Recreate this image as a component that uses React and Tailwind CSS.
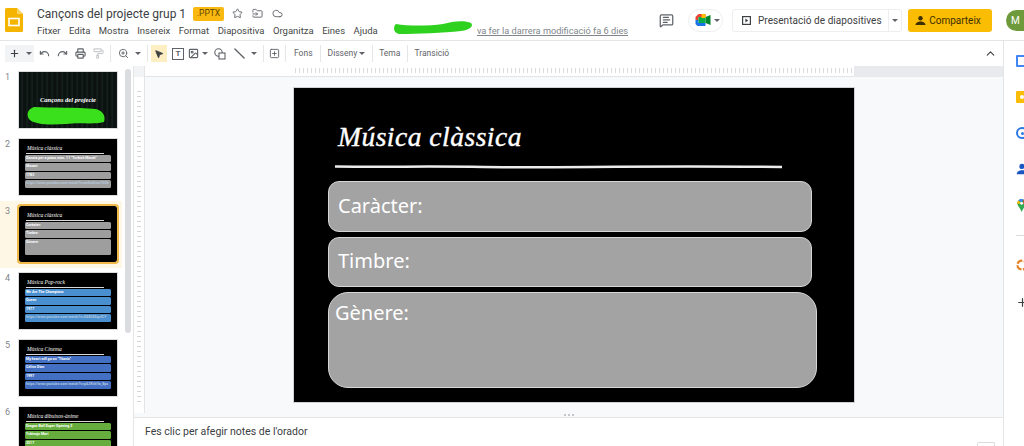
import React from 'react';
import {
  Plus, Undo, Redo, Printer, PaintRoller, ZoomIn, MousePointer2, Image, Slash,
  SquarePlus, Star, FolderInput, Cloud, MessageSquareText, ChevronUp,
} from 'lucide-react';

const menus = ['Fitxer', 'Edita', 'Mostra', 'Insereix', 'Format', 'Diapositiva', 'Organitza', 'Eines', 'Ajuda'];

const Caret = ({ className = '' }) => (
  <span className={`inline-block w-0 h-0 border-x-[3px] border-x-transparent border-t-[3px] border-t-[#5f6368] ${className}`} />
);

const Sep = () => <div className="w-px h-[17px] bg-[#e4e6e8] shrink-0" />;

const TextTool = ({ children, className = '' }) => (
  <span className={`text-[8.5px] text-[#5f6368] flex items-center gap-[2px] shrink-0 ${className}`}>{children}</span>
);

const Thumb = ({ num, active, bg = 'bg-[#9e9e9e]', rows, title, children }) => (
  <div className={`h-[67px] flex pt-[5px] pl-[5px] relative ${active ? 'bg-[#fef7e6]' : ''}`}>
    <span className="w-[14px] text-[9px] text-[#80868b] leading-none mt-[1px]">{num}</span>
    <div className={`w-[98px] h-[56px] bg-black overflow-hidden shrink-0 ${active ? 'outline-2 outline-[#f0b94a] rounded-[2px]' : 'outline-1 outline-[#dadce0]'}`}>
      {children || (
        <div className="pt-[6px] pl-[8px] pr-[6px]">
          <div className="text-white italic text-[5.5px] leading-[7px] font-['Liberation_Serif',serif] truncate">{title}</div>
          <div className="h-px w-[78px] bg-[#d8d8d8] mt-[1px] mb-[1px] ml-[-1px]" />
          <div className="flex flex-col gap-[1px] ml-[-2px]">
            {rows.map((r, i) => (
              <div key={i} className={`${bg} rounded-[1.5px] text-[3.6px] font-bold px-[1px] truncate ${r.link ? 'text-[#b4c8dc]' : 'text-white'} ${r.tall ? 'h-[16px]' : 'h-[7.4px]'} leading-[7px]`}>
                {r.t}
              </div>
            ))}
          </div>
        </div>
      )}
    </div>
  </div>
);

export default function App() {
  return (
    <div className="w-[1024px] h-[446px] overflow-hidden bg-white flex flex-col font-['Roboto',sans-serif] text-[#3c4043]">
      {/* Top bar */}
      <header className="h-[41px] shrink-0 flex border-b border-[#e3e5e7]">
        <div className="w-[37px] shrink-0 pl-[5px] pt-[8px]">
          <svg width="18" height="24" viewBox="0 0 18 24">
            <path d="M1.5 0H12L18 6V22.5A1.5 1.5 0 0 1 16.5 24H1.5A1.5 1.5 0 0 1 0 22.5V1.5A1.5 1.5 0 0 1 1.5 0Z" fill="#f4b400" />
            <path d="M12 0V6H18Z" fill="#f9d262" />
            <rect x="4" y="10.5" width="10" height="7" fill="none" stroke="#fff" strokeWidth="1.6" />
          </svg>
        </div>
        <div className="flex-1 flex flex-col pt-[5px] min-w-0">
          <div className="flex items-center h-[17px]">
            <span className="text-[12px] leading-none text-[#3c4043] w-[156px] whitespace-nowrap">Cançons del projecte grup 1</span>
            <span className="w-[31px] h-[14px] rounded-[2px] bg-[#f9b911] text-[8.5px] text-[#5f4300] flex items-center justify-center">.PPTX</span>
            <Star size={11} className="ml-[8px] text-[#5f6368]" />
            <FolderInput size={11} className="ml-[9px] text-[#5f6368]" />
            <Cloud size={11} className="ml-[9px] text-[#5f6368]" />
          </div>
          <div className="flex items-center h-[16px] mt-[1px] text-[9.5px] text-[#444746]">
            <div className="flex gap-[8.5px] w-[356px] pl-[-1px]">
              {menus.map((m) => <span key={m}>{m}</span>)}
            </div>
            <div className="relative w-[235px] text-right text-[9.2px] text-[#80868b] underline whitespace-nowrap">
              va fer la darrera modificació fa 6 dies
              <svg className="absolute left-0 top-[-4px]" width="82" height="16" viewBox="0 0 82 16">
                <path d="M3 4C15 6 35 6 50 4C60 1 72 0 78 3C81 6 77 10 68 11C50 13 25 14 6 14C0 13 0 6 3 4Z" fill="#2fd11f" />
              </svg>
            </div>
          </div>
        </div>
        <div className="flex items-center h-[40px] shrink-0">
          <MessageSquareText size={15} className="text-[#5f6368] mr-[14px]" />
          <div className="w-[35px] h-[23px] rounded-full border border-[#eceef0] flex items-center pl-[6px] gap-[3px] mr-[9px]">
            <svg width="16" height="12" viewBox="0 0 15 12">
              <path d="M0 3L3 0H10V3H3V6H0Z" fill="#ea4335" />
              <path d="M0 6H3V9H10V12H2L0 10Z" fill="#1a73e8" />
              <path d="M10 3L15 1V11L10 9Z" fill="#00832d" />
              <path d="M3 3H10V9H3Z" fill="#00ac47" />
              <path d="M6 0H10V4H6Z" fill="#ffba00" />
            </svg>
            <Caret />
          </div>
          <div className="w-[170px] h-[23px] rounded-[3px] border border-[#eceef0] flex items-center mr-[6px]">
            <div className="flex-1 flex items-center pl-[9px] gap-[7px] text-[10px] tracking-[0.05px] text-[#3c4043] whitespace-nowrap min-w-0">
              <svg width="9" height="9" viewBox="0 0 9 9" className="shrink-0">
                <rect x="0.6" y="0.6" width="7.8" height="7.8" fill="none" stroke="#3c4043" strokeWidth="1.2" />
                <path d="M3.4 2.6L6.2 4.5L3.4 6.4Z" fill="#3c4043" />
              </svg>
              Presentació de diapositives
            </div>
            <div className="w-[13px] shrink-0 h-full border-l border-[#eceef0] flex items-center justify-center">
              <Caret />
            </div>
          </div>
          <div className="w-[84px] h-[23px] rounded-[3px] bg-[#fbbc04] flex items-center justify-center gap-[3px] pr-[4px] text-[10px] text-[#3c2f00] mr-[14px]">
            <svg width="11" height="9" viewBox="0 0 11 9">
              <circle cx="5.5" cy="2.3" r="2.2" fill="#3c2f00" />
              <path d="M0.5 9C0.5 6.8 3 5.5 5.5 5.5S10.5 6.8 10.5 9Z" fill="#3c2f00" />
            </svg>
            Comparteix
          </div>
          <div className="w-[18px] h-[21px] rounded-l-full bg-[#6f9a3b] text-white text-[10px] flex items-center pl-[5px] mt-[1px] shrink-0">M</div>
        </div>
      </header>

      <div className="flex-1 flex min-h-0">
        <div className="w-[1003px] shrink-0 flex flex-col min-w-0">
          {/* Toolbar */}
          <div className="h-[25px] shrink-0 flex items-center pl-[5px] text-[#5f6368]">
            <div className="w-[29px] h-[17px] bg-[#f1f3f4] flex items-center pl-[4px] gap-[6px] shrink-0">
              <Plus size={11} strokeWidth={2.5} className="text-[#3c4043]" />
              <Caret />
            </div>
            <Undo size={11} strokeWidth={2.5} className="ml-[5px] shrink-0" />
            <Redo size={11} strokeWidth={2.5} className="ml-[7px] shrink-0" />
            <Printer size={11} strokeWidth={2.5} className="ml-[7px] shrink-0" />
            <PaintRoller size={11} strokeWidth={2.5} className="ml-[7px] shrink-0 text-[#c9cbce]" />
            <div className="ml-[6px]"><Sep /></div>
            <ZoomIn size={11} className="ml-[7px] shrink-0" />
            <Caret className="ml-[6px] shrink-0" />
            <div className="ml-[6px]"><Sep /></div>
            <div className="w-[16px] h-[17px] ml-[3px] bg-[#feefc3] flex items-center justify-center shrink-0">
              <MousePointer2 size={10} className="fill-[#3c4043] text-[#3c4043]" />
            </div>
            <div className="ml-[5px] w-[12px] h-[12px] border border-[#5f6368] text-[8px] leading-[10px] text-center font-bold shrink-0">T</div>
            <Image size={11} strokeWidth={2.5} className="ml-[4px] shrink-0" />
            <Caret className="ml-[3px] shrink-0" />
            <svg width="12" height="12" viewBox="0 0 12 12" className="ml-[6px] shrink-0">
              <circle cx="4.5" cy="4.5" r="3.7" fill="none" stroke="#5f6368" strokeWidth="1.1" />
              <rect x="5" y="5" width="6" height="6" fill="#fff" stroke="#5f6368" strokeWidth="1.1" />
            </svg>
            <Slash size={11} strokeWidth={3} className="ml-[8px] shrink-0 rotate-90" />
            <Caret className="ml-[6px] shrink-0" />
            <div className="ml-[6px]"><Sep /></div>
            <SquarePlus size={11} className="ml-[5px] shrink-0" />
            <div className="ml-[5px]"><Sep /></div>
            <TextTool className="ml-[8px]">Fons</TextTool>
            <div className="ml-[7px]"><Sep /></div>
            <TextTool className="ml-[7px]">Disseny <Caret /></TextTool>
            <div className="ml-[7px]"><Sep /></div>
            <TextTool className="ml-[6px]">Tema</TextTool>
            <div className="ml-[7px]"><Sep /></div>
            <TextTool className="ml-[6px]">Transició</TextTool>
            <ChevronUp size={13} className="ml-auto mr-[6px] text-[#3c4043]" />
          </div>

          <div className="flex-1 flex min-h-0">
            {/* Filmstrip */}
            <div className="w-[134px] shrink-0 relative border-r border-[#e3e5e7] overflow-hidden pt-[1px]">
              <div className="w-[122px]">
                <Thumb num="1">
                  <div className="h-full bg-[repeating-linear-gradient(90deg,#0b1210_0px,#0b1210_2px,#17251f_3px,#0a0d0f_5px)] flex flex-col items-center pt-[25px] relative">
                    <span className="text-white italic font-bold text-[6.5px] leading-none font-['Liberation_Serif',serif]">Cançons del projecte</span>
                    <svg className="absolute left-[7px] top-[35px]" width="80" height="18" viewBox="0 0 80 18">
                      <path d="M8 0C25 1 50 0 70 2C77 4 80 9 78 15C65 18 55 15 40 17C25 18 8 18 3 12C0 7 2 2 8 0Z" fill="#3ae01c" />
                    </svg>
                  </div>
                </Thumb>
                <Thumb num="2" title="Música clàssica" rows={[{ t: 'Sonata per a piano núm. 11 "Turkish March"' }, { t: 'Mozart' }, { t: '1783' }, { t: 'https://www.youtube.com/watch?v=aeEmGvm7kDk', link: true }]} />
                <Thumb num="3" active title="Música clàssica" rows={[{ t: 'Caràcter:' }, { t: 'Timbre:' }, { t: 'Gènere:', tall: true }]} />
                <Thumb num="4" bg="bg-[#4a8fd0]" title="Música Pop-rock" rows={[{ t: 'We Are The Champions' }, { t: 'Queen' }, { t: '1977' }, { t: 'https://www.youtube.com/watch?v=04854XqcfCY', link: true }]} />
                <Thumb num="5" bg="bg-[#4470c4]" title="Música Cinema" rows={[{ t: 'My heart will go on "Titanic"' }, { t: 'Céline Dion' }, { t: '1997' }, { t: 'https://www.youtube.com/watch?v=pA3KvkVa_8ps', link: true }]} />
                <Thumb num="6" bg="bg-[#66ad3d]" title="Música dibuixos-ànime" rows={[{ t: 'Dragon Ball Super Opening 2' }, { t: 'Yukinojo Mori' }, { t: '2017' }]} />
              </div>
              <div className="absolute left-[125px] top-[3px] w-[6px] h-[264px] rounded-full bg-[#dadce0]" />
            </div>

            {/* Editor */}
            <div className="flex-1 flex flex-col min-w-0">
              <div className="flex-1 flex flex-col min-h-0 bg-[#f8f9fa]">
                <div className="h-[11px] shrink-0 flex">
                  <div className="w-[11px] bg-[#f1f3f4] border-r border-[#e3e5e7]" />
                  <div className="w-[709px] bg-white border-b border-[#e3e5e7] pl-[150px] pt-[2px]">
                    <div className="h-[5px] bg-[repeating-linear-gradient(90deg,#c8cacc_0px,#c8cacc_1px,transparent_1px,transparent_4px)] opacity-70" />
                  </div>
                  <div className="flex-1 bg-[#e8eaed]" />
                </div>
                <div className="flex-1 flex min-h-0">
                  <div className="w-[11px] shrink-0 bg-white border-r border-[#e3e5e7] pt-[11px] pb-[11px] px-[3px]">
                    <div className="h-full bg-[repeating-linear-gradient(0deg,#d4d6d8_0px,#d4d6d8_1px,transparent_1px,transparent_5px)]" />
                  </div>
                  <div className="flex-1 pl-[148px] pt-[10px]">
                    {/* Slide */}
                    <div className="w-[562px] h-[316px] bg-black border border-[#cfd1d4] pl-[34px] pt-[31px] font-['Noto_Sans',sans-serif]">
                      <div className="text-white italic text-[27.5px] leading-[36px] ml-[10px] tracking-[0.5px] [-webkit-text-stroke:0.4px_white] font-['Liberation_Serif',serif]">Música clàssica</div>
                      <svg width="450" height="6" viewBox="0 0 450 6" className="block mt-[9px] ml-[6px]">
                        <path d="M1 2.5C60 3.2 90 2 150 3C230 4 300 1.5 448 3" fill="none" stroke="#ececec" strokeWidth="2.5" />
                      </svg>
                      <div className="mt-[11px] flex flex-col gap-[5px] text-white text-[20px]">
                        <div className="w-[484px] h-[51px] rounded-[11px] bg-[#a3a3a3] border border-[#d6d6d6] flex items-center pl-[9px] pb-[2px]">Caràcter:</div>
                        <div className="w-[484px] h-[50px] rounded-[11px] bg-[#a3a3a3] border border-[#d6d6d6] flex items-center pl-[9px] pb-[2px]">Timbre:</div>
                        <div className="w-[489px] h-[96px] rounded-[20px] bg-[#a3a3a3] border border-[#d6d6d6] pl-[6px] leading-[40px]">Gènere:</div>
                      </div>
                    </div>
                  </div>
                </div>
              </div>
              <div className="h-[5px] shrink-0 bg-[#f8f9fa] border-b border-[#e3e5e7] flex items-center justify-center gap-[2px]">
                <span className="w-[2px] h-[2px] bg-[#c4c7ca]" />
                <span className="w-[2px] h-[2px] bg-[#c4c7ca]" />
                <span className="w-[2px] h-[2px] bg-[#c4c7ca]" />
              </div>
              <div className="h-[28px] shrink-0 flex items-center pl-[11px] text-[10.5px] text-[#3c4043] relative">
                Fes clic per afegir notes de l'orador
                <div className="absolute right-[8px] bottom-0 w-[18px] h-[4px] border border-b-0 border-[#dadce0] rounded-t-[2px]" />
              </div>
            </div>
          </div>
        </div>

        {/* Side panel */}
        <aside className="flex-1 border-l border-[#e3e5e7] overflow-hidden flex flex-col items-start pl-[12px] pt-[14px]">
          <div className="w-[12px] h-[12px] shrink-0 rounded-[1px] bg-[#4285f4] p-[2px] overflow-hidden"><div className="bg-white w-full h-full" /></div>
          <div className="w-[12px] h-[12px] shrink-0 mt-[24px] rounded-[1px] bg-[#fbbc04] flex items-center justify-center"><span className="w-[4px] h-[4px] rounded-full bg-white" /></div>
          <div className="w-[12px] h-[12px] shrink-0 mt-[24px] rounded-full border-2 border-[#2b78e4] flex items-center justify-center"><span className="w-[3px] h-[3px] bg-[#2b78e4] rounded-full" /></div>
          <svg width="12" height="12" viewBox="0 0 16 16" className="shrink-0 mt-[24px]">
            <circle cx="8" cy="4.5" r="3.5" fill="#1a56c4" />
            <path d="M1 15C1 11 4.5 9.5 8 9.5S15 11 15 15Z" fill="#1a56c4" />
          </svg>
          <svg width="12" height="13" viewBox="0 0 16 18" className="shrink-0 mt-[24px]">
            <path d="M7.5 0A6 6 0 0 1 13.5 6C13.5 10 9 13 7.5 18C6 13 1.5 10 1.5 6A6 6 0 0 1 7.5 0Z" fill="#34a853" />
            <path d="M3 2L7.5 6L1.5 7C1.3 5 1.8 3.2 3 2Z" fill="#fbbc04" />
            <path d="M3 2A6 6 0 0 1 10 .6L7.500 4Z" fill="#4285f4" />
            <path d="M10 .6A6 6 0 0 1 13.5 6L9.5 7Z" fill="#ea4335" />
            <circle cx="7.5" cy="6" r="2" fill="#fff" />
          </svg>
          <div className="w-[12px] h-px bg-[#dadce0] mt-[23px] shrink-0" />
          <svg width="12" height="12" viewBox="0 0 16 16" className="shrink-0 mt-[23px]">
            <circle cx="8" cy="8" r="6" fill="none" stroke="#e8832a" strokeWidth="3" strokeDasharray="8 2" />
          </svg>
          <Plus size={13} strokeWidth={2.2} className="shrink-0 mt-[25px] text-[#3c4043]" />
        </aside>
      </div>
    </div>
  );
}
